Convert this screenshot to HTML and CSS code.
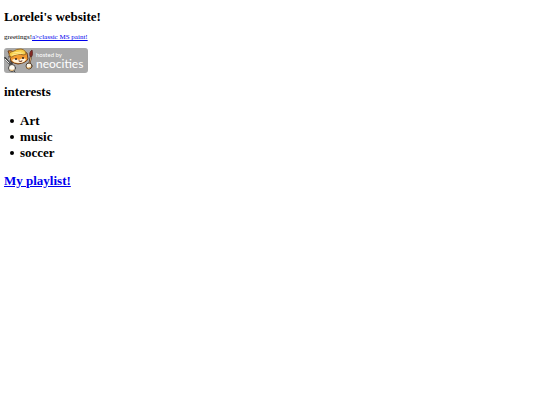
FILE: index.html
```html
<!DOCTYPE html>
<html lang="en">
<head>
<meta charset="utf-8">
<title>Lorelei's website!</title>
<link rel="stylesheet" href="styles.css">
</head>
<body>
<h1>Lorelei's website!</h1>
<p class="greeting">greetings!<a href="#paint">a&gt;classic MS paint!</a></p>
<a class="badge" href="#neocities" aria-label="hosted by neocities">
<svg class="cat" viewBox="0 0 30 25" aria-hidden="true">
  <g stroke-linecap="round" stroke-linejoin="round">
    <path d="M1 10 7 17M5 9 8 15" fill="none" stroke="#444" stroke-width="2"/>
    <path d="M1 11 5 15M5 9 6 12" fill="none" stroke="#e8e8e8" stroke-width="1"/>
    <path d="M25 18 27 8" fill="none" stroke="#3c2720" stroke-width="2"/>
    <path d="M25 18 27 9" fill="none" stroke="#d8a76d" stroke-width="1"/>
    <path d="M26 8Q25 4 28 2 29 6 28 8Z" fill="#8e2520" stroke="#62302c" stroke-width="1"/>
    <path d="M6 8 4 3Q7 2 10 4L18 3 23 5 24 11Q22 15 14 16 6 15 6 10Z" fill="#f29a30" stroke="#6a3c1c" stroke-width="1"/>
    <path d="M8 12Q11 10 15 12Q19 9 22 11 21 15 15 15 9 15 8 12Z" fill="#fff3db"/>
    <path d="M5 7Q5 4 10 3 12 1 17 1 22 2 22 6L20 7Q13 5 8 9Z" fill="#f6cb45" stroke="#9a6c28" stroke-width="1"/>
    <path d="M9 5 17 4M8 7 19 5" fill="none" stroke="#ffeb91" stroke-width="1"/>
    <ellipse cx="12" cy="11" rx="1" ry="1" fill="#2c211d"/>
    <ellipse cx="19" cy="10" rx="1" ry="1" fill="#2c211d"/>
    <path d="M15 13Q17 14 18 13" fill="#a63222" stroke="#633020" stroke-width="1"/>
    <circle cx="8" cy="20" r="3.5" fill="#fffaf0" stroke="#444" stroke-width="1"/>
    <path d="M6 22Q8 23 10 22" fill="none" stroke="#e3ae62" stroke-width="1"/>
    <path d="M10 23 11 24" fill="none" stroke="#444" stroke-width="1"/>
    <circle cx="25" cy="18" r="3" fill="#fff8e7" stroke="#55412e" stroke-width="1"/>
    <path d="M23 20Q25 21 27 19" fill="none" stroke="#d99a45" stroke-width="1"/>
  </g>
</svg>
<span class="wordmark"><span class="hosted">hosted by</span><span class="name">neocities</span></span>
</a>
<h2>interests</h2>
<ul>
  <li>Art</li>
  <li>music</li>
  <li>soccer</li>
</ul>
<h2><a href="#playlist">My playlist!</a></h2>
</body>
</html>
```
FILE: styles.css
```css
body {
  margin: 9px 4px;
  background: #fff;
  color: #000;
  font: 7px/8px "Liberation Serif", serif;
}
h1, h2, ul {
  font-size: 13px;
  line-height: 16px;
  font-weight: bold;
}
h1 { margin: 0 0 8px; }
.greeting { margin: 0 0 7px; }
a { color: #0000ee; }
.badge {
  display: flex;
  width: max-content;
  padding-right: 5px;
  border-radius: 3px;
  background: #a9a9a9;
  color: #fff;
  text-decoration: none;
}
.cat {
  width: 30px;
  height: 25px;
}
.wordmark {
  display: flex;
  flex-direction: column;
  padding: 4px 0 0 2px;
  font-family: Lato, sans-serif;
}
.hosted {
  font-size: 6px;
  line-height: 6px;
}
.name {
  font-size: 12px;
  line-height: 12px;
}
h2 { margin: 11px 0 13px; }
ul {
  margin: 0 0 12px;
  padding: 0;
  list-style: none;
}
li {
  display: flex;
  align-items: center;
  gap: 6px;
  padding-left: 6px;
}
li::before {
  content: "";
  width: 4px;
  height: 4px;
  border-radius: 50%;
  background: #000;
}
```
